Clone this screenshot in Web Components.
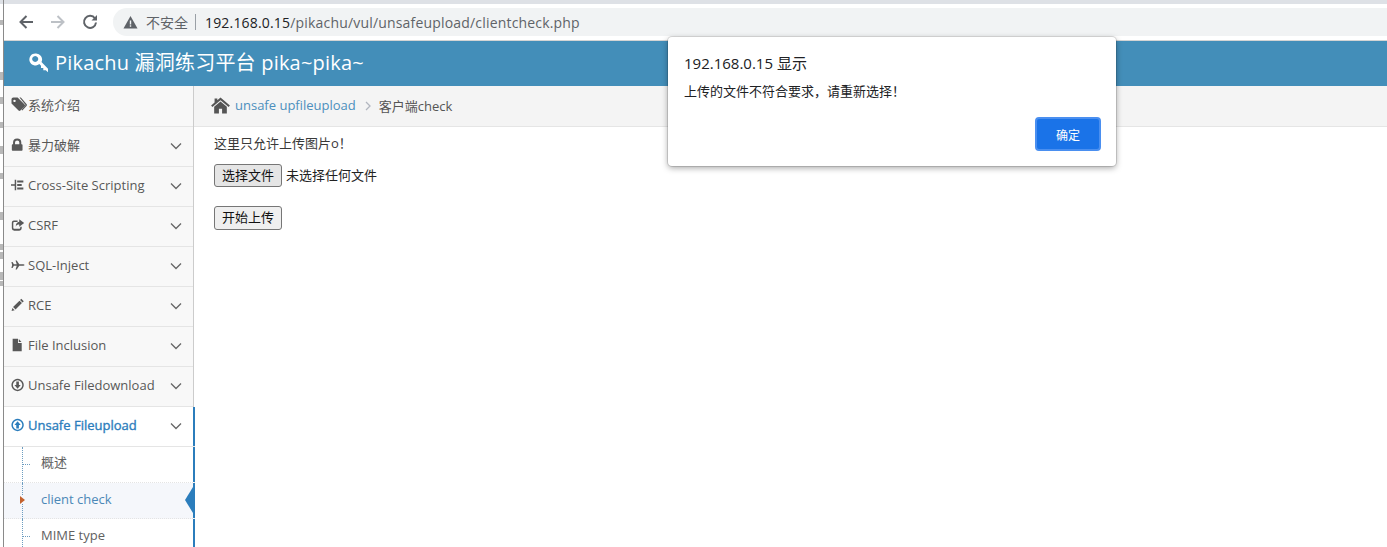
<!DOCTYPE html>
<html lang="zh"><head><meta charset="utf-8"><title>Pikachu</title>
<style>
html,body{margin:0;height:547px;overflow:hidden;background:#fff;font-family:"Open Sans","Noto Sans CJK SC",sans-serif}
</style></head><body>
<app-window>
  <browser-bar slot="top" insecure="不安全" url="192.168.0.15/pikachu/vul/unsafeupload/clientcheck.php"></browser-bar>
  <app-header slot="top">Pikachu 漏洞练习平台 pika~pika~</app-header>
  <side-nav slot="side">
    <nav-item icon="tags" label="系统介绍" nochev first></nav-item>
    <nav-item icon="lock" label="暴力破解" cjk></nav-item>
    <nav-item icon="tree" label="Cross-Site Scripting"></nav-item>
    <nav-item icon="share" label="CSRF"></nav-item>
    <nav-item icon="plane" label="SQL-Inject"></nav-item>
    <nav-item icon="pencil" label="RCE"></nav-item>
    <nav-item icon="file" label="File Inclusion"></nav-item>
    <nav-item icon="down" label="Unsafe Filedownload"></nav-item>
    <nav-item icon="up" label="Unsafe Fileupload" active></nav-item>
    <sub-item label="概述" cjk></sub-item>
    <sub-item label="client check" active></sub-item>
    <sub-item label="MIME type"></sub-item>
  </side-nav>
  <bread-crumbs slot="main" parent="unsafe upfileupload" current="客户端check"></bread-crumbs>
  <upload-page slot="main"></upload-page>
  <alert-dialog origin="192.168.0.15 显示" message="上传的文件不符合要求，请重新选择！" ok="确定"></alert-dialog>
</app-window>
<script>
const ICONS={
 tags:'<path d="M.5 2.500A2 2 0 0 1 2.500.5H7l7.500 7.500a1.400 1.400 0 0 1 0 2l-4.500 4.500a1.400 1.400 0 0 1-2 0L.5 7Zm3.200 .3a1.300 1.300 0 1 0 .01 0Z" fill-rule="evenodd"/><path d="M9 .5h1.500l6 7a1.500 1.500 0 0 1 0 2l-4.500 5-.9-.8 4-4.500a1 1 0 0 0 0-1.300Z"/>',
 lock:'<path d="M2.500 7V5a5 5 0 0 1 10 0v2h.5a1 1 0 0 1 1 1v6a1 1 0 0 1-1 1H2a1 1 0 0 1-1-1V8a1 1 0 0 1 1-1Zm2.400 0h5.200V5a2.600 2.600 0 0 0-5.200 0Z" fill-rule="evenodd"/>',
 tree:'<path d="M4.500 1.500h1.800v13H4.500V8.800H0V7.200h4.500ZM7.500 2.500H15v2.400H7.500ZM7.500 6.800H13v2.400H7.500ZM7.500 11.100H15v2.400H7.500Z"/>',
 share:'<path d="M3.500 2.500H8v1.800H3.800a1 1 0 0 0-1 1v6.400a1 1 0 0 0 1 1h6.400a1 1 0 0 0 1-1V10H13v2a3 3 0 0 1-3 3H4a3 3 0 0 1-3-3V5a2.700 2.700 0 0 1 2.500-2.500Z"/><path d="M10 1l6 4.500-6 4.500V7.500c-2 0-3.500.6-4.200 2.500C5.600 6.500 7.500 4.200 10 4Z"/>',
 plane:'<path d="M.5 4.500h1.400l1.600 2.500H7L5.500 2.500h1.500L10 7h4c1.500 0 2.500.5 2.500 1s-1 1-2.500 1H10l-3 4.500H5.500L7 9H3.500l-1.600 2.500H.5l.9-3.500Z"/>',
 pencil:'<path d="M12.500.5l3 3-1.500 1.500-3-3ZM10.300 2.700l3 3L5.500 13.500l-3-3ZM1.700 11.500l2.800 2.800-3.800 1Z"/>',
 file:'<path d="M2 .5h6.500v5H13v10H2ZM9.500.8 12.700 4.500H9.500Z"/>',
 down:'<path d="M8 .5a7.500 7.500 0 1 0 .01 0Zm0 1.800a5.700 5.700 0 1 1-.01 0ZM6.400 3.800h3.200V8h2.200L8 12.500 4.200 8h2.200Z" fill-rule="evenodd"/>',
 up:'<path d="M8 .5a7.500 7.500 0 1 0 .01 0Zm0 1.800a5.700 5.700 0 1 1-.01 0ZM8 3.500 11.800 8H9.600v4.200H6.400V8H4.200Z" fill-rule="evenodd"/>'
};
function def(name,css,html){
  customElements.define(name,class extends HTMLElement{
    connectedCallback(){ if(this.shadowRoot)return;
      const r=this.attachShadow({mode:'open'});
      const a=n=>this.getAttribute(n)||'';
      r.innerHTML='<style>'+css+'</style>'+html(a,this);
    }
  });
}
const smudges=[[20,5],[72,8],[97,7],[122,6],[146,8],[173,6],[212,8],[244,6],[252,7],[272,8],[281,5]]
  .map(([y,h])=>`<rect x="0" y="${y}" width="3" height="${h}" fill="#9a9a9a" opacity=".7"/>`).join('');
def('app-window',`
:host{display:block;position:relative;width:1387px;height:547px;overflow:hidden}
.wrap{display:flex;height:100%}
.edge{width:3px;flex:none;background:#fff;border-right:1px solid #8a8a8a}
.edge svg{display:block}
.col{flex:1;min-width:0;display:flex;flex-direction:column}
.body{flex:1;display:flex;min-height:0}
.main{flex:1;min-width:0}
`,()=>`<div class="wrap"><div class="edge"><svg width="3" height="547" aria-hidden="true"><rect width="3" height="4" fill="#dee1e6"/>${smudges}</svg></div><div class="col"><slot name="top"></slot><div class="body"><slot name="side"></slot><div class="main"><slot name="main"></slot></div></div></div></div><slot></slot>`);
def('browser-bar',`
:host{display:block;height:41px;background:#fff;border-top:4px solid #dee1e6;border-bottom:1px solid #d4d4d4;box-sizing:border-box;font-family:"Open Sans","Noto Sans CJK SC",sans-serif}
.row{display:flex;align-items:center;height:36px;padding-left:14px}
svg{flex:none;display:block}
.nav{display:flex;gap:16px;width:95px}
.pill{flex:1;height:28px;background:#f1f3f4;border-radius:14px 0 0 14px;display:flex;align-items:center;padding-left:10px;font-size:14px;color:#5f6368}
.sep{width:1px;height:16px;background:#9aa0a6;margin:0 9px 0 7px}
.warn{margin-right:8px}
.url{font-size:14px;color:#202124;letter-spacing:.18px}.url span{color:#5f6368}
`,a=>{const u=a('url'),i=u.indexOf('/');return `<div class="row"><div class="nav">
<svg width="16" height="16" viewBox="0 0 16 16" fill="none" stroke="#5f6368" stroke-width="2"><path d="M15 8H3M8.500 2 2.500 8l6 6"/></svg>
<svg width="16" height="16" viewBox="0 0 16 16" fill="none" stroke="#bdc1c6" stroke-width="2"><path d="M1 8h12M7.500 2l6 6-6 6"/></svg>
<svg width="16" height="16" viewBox="0 0 16 16" fill="none" stroke="#5f6368" stroke-width="2"><path d="M13 4.500A6 6 0 1 0 14 8.500"/><path d="M15 1v5.500H9.500z" fill="#5f6368" stroke="none"/></svg>
</div><div class="pill"><svg class="warn" width="15" height="14" viewBox="0 0 15 14"><path d="M7.500 1 14.500 13.500H.5Z" fill="#5f6368"/><path d="M6.800 5.500h1.400v4H6.800zM6.800 10.300h1.400v1.400H6.800z" fill="#f1f3f4"/></svg>${a('insecure')}<i class="sep"></i><div class="url">${u.slice(0,i)}<span>${u.slice(i)}</span></div></div></div>`});
def('app-header',`
:host{display:flex;align-items:center;height:45px;box-sizing:border-box;padding:0 0 4px 25px;background:#438eb9;color:#fff;font:20px "Open Sans","Noto Sans CJK SC",sans-serif;letter-spacing:.2px;gap:5px}
svg{position:relative;top:1px}
`,()=>`<svg width="21" height="20" viewBox="0 0 21 20" fill="#fff"><path d="M6.500 .5a6 6 0 1 0 3.800 10.500l1.700 1.700v2.300h2.300v2.300h2.500l2.200 2v-3.500L12.500 9A6 6 0 0 0 6.500 .5Zm-.3 2.500a3 3 0 1 1-.01 0Z" fill-rule="evenodd"/></svg><slot></slot>`);
def('side-nav',`:host{display:block;width:190px;flex:none;box-sizing:border-box;background:#f8f8f8;border-right:1px solid #ccc}`,()=>`<slot></slot>`);
def('nav-item',`
:host{display:flex;align-items:center;height:40px;box-sizing:border-box;border-bottom:1px solid #e5e5e5;padding:0 0 3px 7px;font:13px "Open Sans","Noto Sans CJK SC",sans-serif;color:#585858;background:#f8f8f8;position:relative}
:host([first]){height:41px}
:host([active]){background:#fff;color:#2b7dbc;-webkit-text-stroke:.35px #2b7dbc;margin-right:-2px;box-shadow:inset -2px 0 0 #2b7dbc}
svg.i{width:14px;height:14px;fill:currentColor;margin-right:3px;flex:none;stroke:none}
:host([first]) svg.i{width:16px;height:15px;margin-right:1px}
.l{flex:1;white-space:nowrap}
:host([cjk]) .l{position:relative;top:-1px}
.c{width:12px;height:8px;margin-right:11px;fill:none;stroke:#666;stroke-width:1.300;position:relative;top:1px}
:host([active]) .c{margin-right:13px}
`,(a,el)=>`<svg class="i" viewBox="0 0 17 16">${ICONS[a('icon')]}</svg><span class="l">${a('label')}</span>${el.hasAttribute('nochev')?'':'<svg class="c" viewBox="0 0 12 8"><path d="M1 1.500 6 6.500 11 1.500"/></svg>'}`);
def('sub-item',`
:host{display:flex;align-items:center;height:36px;box-sizing:border-box;background:#fff;padding:0 0 3px 37px;font:13px "Open Sans","Noto Sans CJK SC",sans-serif;color:#616161;position:relative;border-bottom:1px dotted #e4e4e4;margin-right:-2px;box-shadow:inset -2px 0 0 #2b7dbc}
:host([active]){background:#f5f7fb;color:#4b88b7}
:host([cjk]){padding-bottom:7px}
.v{position:absolute;left:18px;top:0;bottom:-1px;border-left:1px dotted #6d9dc0}
.h{position:absolute;left:19px;top:17px;width:7px;border-top:1px dotted #6d9dc0}
.a{position:absolute;left:16px;top:13px;width:0;height:0;border:4px solid transparent;border-left:5px solid #c4622d;border-right:0}
.t{position:absolute;right:2px;top:4px;width:0;height:0;border:13px solid transparent;border-right:8px solid #2b7dbc;border-left:0}
.m{position:absolute;left:18px;top:13px;height:8px;width:3px;background:inherit}
`,(a,el)=>{const on=el.hasAttribute('active');return `<i class="v"></i>${on?'<i class="m"></i><i class="a"></i><i class="t"></i>':'<i class="h"></i>'}${a('label')}`});
def('bread-crumbs',`
:host{display:flex;align-items:center;height:41px;box-sizing:border-box;background:#f4f4f4;border-bottom:1px solid #e5e5e5;padding:0 0 2px 17px;font:13px "Open Sans","Noto Sans CJK SC",sans-serif;color:#555}
svg.h{margin-right:5px;width:19px;height:17px}
.p{color:#4c8fbd}
.s{margin:0 8px 0 9px;fill:none;stroke:#b2b6bf;stroke-width:1.300;position:relative;top:1px}
`,a=>`<svg class="h" viewBox="0 0 18 16" fill="#555"><path d="M9 .4 17.900 8 16.700 9.500 9 3 1.300 9.500.1 8 3.400 5.200V1.400H6V3ZM3 9.300 9 4.200l6 5.100v6.300h-4.500V11h-3v4.600H3Z"/></svg><span class="p">${a('parent')}</span><svg class="s" width="6" height="10" viewBox="0 0 6 10"><path d="M1 1 5 5 1 9"/></svg><span>${a('current')}</span>`);
def('upload-page',`
:host{display:block;padding:7px 0 0 20px;font:13px/18px "Open Sans","Noto Sans CJK SC",sans-serif;color:#393939}
p{margin:0 0 12px;height:18px}
.f{display:flex;align-items:center;gap:4px;height:23px;margin-bottom:19px;color:#222;line-height:20px}
.f span{position:relative;top:-1px}
.b{height:24px;width:68px;box-sizing:border-box;border:1px solid #767676;border-radius:3px;background:#efefef;font:13px/20px "Noto Sans CJK SC",sans-serif;color:#111;padding:0 0 2px}
.x{background:#e5e5e5;height:23px}
`,()=>`<p>这里只允许上传图片o！</p><div class="f"><button class="b x">选择文件</button><span>未选择任何文件</span></div><button class="b">开始上传</button>`);
def('alert-dialog',`
:host{position:absolute;left:668px;top:37px;width:448px;height:129px;box-sizing:border-box;background:#fff;border-radius:4px;box-shadow:0 0 0 1px rgba(0,0,0,.12),0 2px 6px rgba(0,0,0,.35);padding:16px 15px 0 16px;display:flex;flex-direction:column;font-family:"Open Sans","Noto Sans CJK SC",sans-serif;color:#202124}
.o{font-size:15px;line-height:20px}
.m{font-size:13px;line-height:18px;margin-top:9px}
.r{margin-top:auto;margin-bottom:15px;display:flex;justify-content:flex-end}
button{width:66px;height:34px;background:#1a73e8;border:2px solid #4a8ff0;box-sizing:border-box;border-radius:4px;color:#fff;font:12px "Noto Sans CJK SC",sans-serif;padding:0}
`,a=>`<div class="o">${a('origin')}</div><div class="m">${a('message')}</div><div class="r"><button>${a('ok')}</button></div>`);
</script>
</body></html>
